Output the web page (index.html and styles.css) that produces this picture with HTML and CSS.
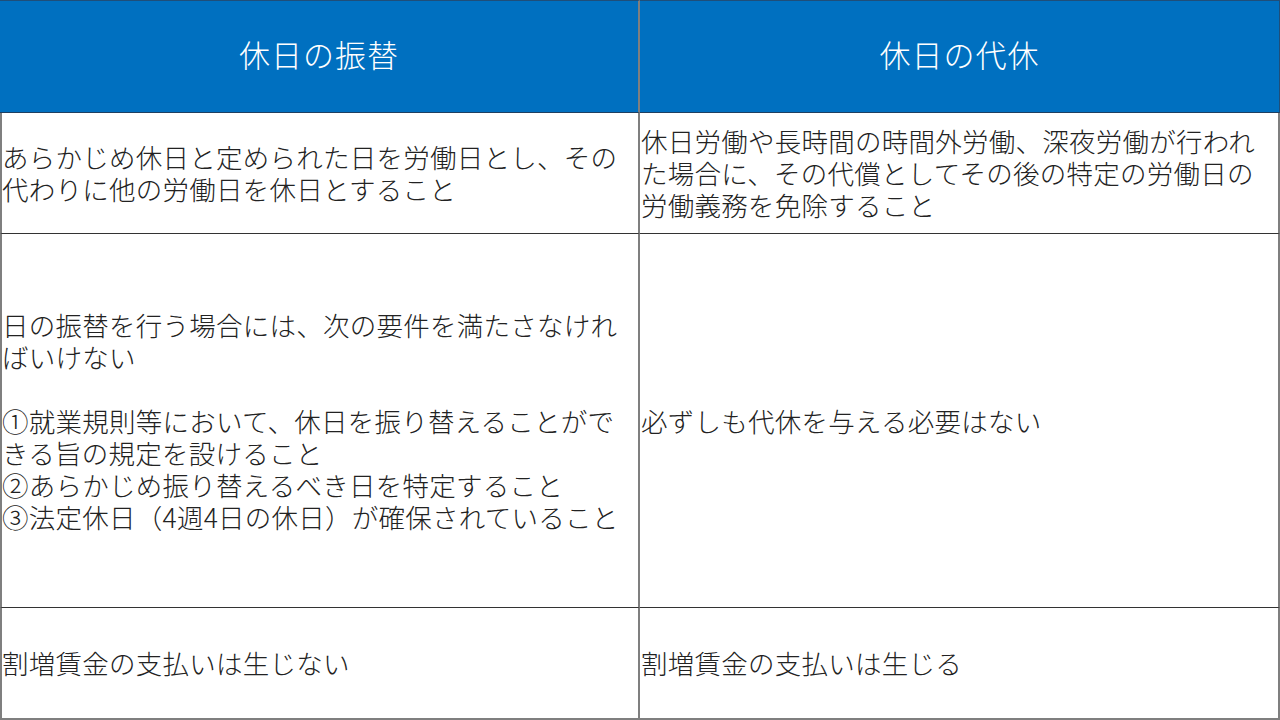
FILE: index.html
```html
<!DOCTYPE html>
<html lang="ja">
<head>
<meta charset="utf-8">
<link rel="stylesheet" href="styles.css">
</head>
<body>
<div class="table">
  <div class="cell head left">休日の振替</div>
  <div class="cell head right">休日の代休</div>
  <div class="cell body left row1">あらかじめ休日と定められた日を労働日とし、その<br>代わりに他の労働日を休日とすること</div>
  <div class="cell body right row1">休日労働や長時間の時間外労働、深夜労働が行われ<br>た場合に、その代償としてその後の特定の労働日の<br>労働義務を免除すること</div>
  <div class="cell body left row2">日の振替を行う場合には、次の要件を満たさなけれ<br>ばいけない<br><br>①就業規則等において、休日を振り替えることがで<br>きる旨の規定を設けること<br>②あらかじめ振り替えるべき日を特定すること<br>③法定休日（4週4日の休日）が確保されていること</div>
  <div class="cell body right row2">必ずしも代休を与える必要はない</div>
  <div class="cell body left row3">割増賃金の支払いは生じない</div>
  <div class="cell body right row3">割増賃金の支払いは生じる</div>
</div>
</body>
</html>
```
FILE: styles.css
```css
html, body {
  margin: 0;
  padding: 0;
  background: #ffffff;
}
body {
  width: 1280px;
  height: 720px;
  overflow: hidden;
  font-family: "Noto Sans CJK JP", "Noto Sans", sans-serif;
  font-weight: 300;
}
.table {
  display: grid;
  grid-template-columns: 640px 640px;
  grid-template-rows: 113px 121px 374px 112px;
  width: 1280px;
  height: 720px;
  box-sizing: border-box;
}
.cell {
  box-sizing: border-box;
  display: flex;
  align-items: center;
  white-space: nowrap;
}
.head {
  background: #0070c0;
  color: #ffffff;
  font-size: 31px;
  justify-content: center;
  padding-bottom: 7px;
  border-top: 1px solid #1f4e79;
  border-bottom: 1px solid #1f3f60;
  letter-spacing: 1px;
}
.head.left {
  border-right: 2px solid #7f7f7f;
}
.head.right {
  border-right: 1px solid #1f4e79;
}
.body {
  color: #222222;
  font-size: 26.5px;
  line-height: 32px;
  letter-spacing: 0.25px;
  justify-content: flex-start;
  border-bottom: 1px solid #333333;
}
.body.left {
  padding-left: 0;
  border-left: 2px solid #7f7f7f;
  border-right: 2px solid #7f7f7f;
}
.body.right {
  padding-left: 1px;
  border-right: 2px solid #7f7f7f;
}
.row3 {
  border-bottom: 2px solid #7f7f7f;
}
```
